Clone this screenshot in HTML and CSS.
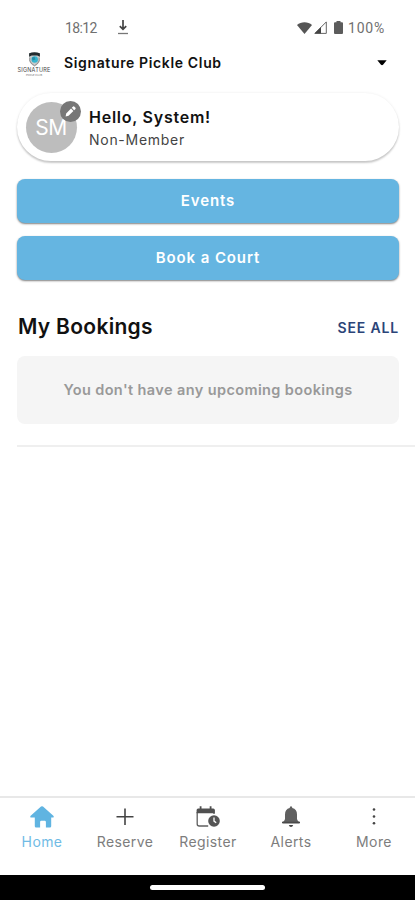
FILE: index.html
```html
<!DOCTYPE html>
<html lang="en">
<head>
<meta charset="utf-8">
<meta name="viewport" content="width=device-width, initial-scale=1">
<title>Signature Pickle Club</title>
<link rel="stylesheet" href="styles.css">
</head>
<body>
<div class="app">
  <div class="status">
    <span class="time">18:12</span>
    <svg class="download" width="12" height="15" viewBox="0 0 12 15"><path d="M6 0v9M2.800 6.200 6 9.400l3.200-3.200" fill="none" stroke="#444" stroke-width="1.700"/><path d="M1 13.500h10" stroke="#777" stroke-width="1.300"/></svg>
    <div class="status-right">
      <svg width="15" height="12" viewBox="0 0 15 12"><path d="M0 3C4-.8 11-.8 15 3L7.500 12z" fill="#555"/></svg>
      <svg width="13" height="13" viewBox="0 0 13 13"><path d="M.9 12.400 12.300.9v11.500z" fill="none" stroke="#666" stroke-width="1"/><path d="M.5 12.500 7 6v6.500z" fill="#444"/></svg>
      <svg class="battery" width="9" height="13" viewBox="0 0 9 13"><path d="M2.500 0h4v1.300H8q1 0 1 1V12q0 1-1 1H1q-1 0-1-1V2.300q0-1 1-1h1.500z" fill="#5c5c5c"/></svg>
      <span class="percent">100%</span>
    </div>
  </div>
  <header class="club">
    <div class="logo">
      <svg width="13" height="15" viewBox="0 0 14 16"><path d="M1.200 1.500Q7-.8 12.800 1.500V9Q12 13 7 15.500 2 13 1.200 9z" fill="#c9cccd"/><path d="M1.200 1.300Q7-.8 12.800 1.300V5L10 3.700H4L1.200 5z" fill="#222b2e"/><path d="M2 6v3.500Q3 12.500 7 14.700q4-2.200 5-5.200V6" fill="none" stroke="#777" stroke-width=".8"/><circle cx="7.200" cy="8" r="3.500" fill="#35b5cf"/><path d="m4 6 3-1 1 3-3 1z" fill="#258ba5"/></svg>
      <span class="logo-name">SIGNATURE</span>
      <span class="logo-sub">PICKLE CLUB</span>
    </div>
    <span class="club-name">Signature Pickle Club</span>
    <svg class="caret" width="10" height="6" viewBox="0 0 10 6"><path d="M.3.3h9.400L6 4.800Q5 5.700 4 4.800z" fill="#000"/></svg>
  </header>
  <main>
    <section class="profile">
      <div class="avatar">SM
        <span class="edit"><svg width="13" height="13" viewBox="0 0 12 12"><path d="M1.500 10.500 2 7.800 6.500 3.300l2.200 2.200-4.500 4.500zM7.200 2.600l1.200-1.200q.5-.4 1 0l1.200 1.200q.4.500 0 1L9.400 4.800z" fill="#fff"/></svg></span>
      </div>
      <div class="who"><span class="hello">Hello, System!</span><span class="member">Non-Member</span></div>
    </section>
    <button class="action">Events</button>
    <button class="action">Book a Court</button>
    <div class="section-head"><h1>My Bookings</h1><a class="see-all">SEE ALL</a></div>
    <div class="empty"><span>You don't have any upcoming bookings</span></div>
    <div class="divider"></div>
  </main>
  <nav>
    <a class="tab active"><svg width="24" height="22" viewBox="0 0 24 22"><path d="M11 .6q1-.8 2 0l10.600 9.300q.7 1.600-.6 1.600h-1.800v8.700q0 1.300-1.300 1.300h-4v-5.600q0-1.200-1.200-1.200h-3.400q-1.200 0-1.200 1.200v5.600h-4q-1.300 0-1.300-1.300v-8.700H1q-1.300 0-.6-1.600z" fill="#60b4e1"/></svg><span>Home</span></a>
    <a class="tab"><svg width="24" height="22" viewBox="0 0 24 22"><path d="M12 2.500v16.500M3.500 10.800h17" stroke="#444" stroke-width="1.600"/></svg><span>Reserve</span></a>
    <a class="tab"><svg width="24" height="22" viewBox="0 0 24 22"><path d="M1.200 6v12q0 2 2 2h9M18 4v4" fill="none" stroke="#606060" stroke-width="1.300"/><path d="M.6 7.300V4q0-1.500 1.500-1.500h15.200q1.500 0 1.500 1.500v3.300z" fill="#505050"/><path d="M4.600.3v4M14.600.3v4" stroke="#505050" stroke-width="1.800"/><circle cx="18" cy="15" r="6.600" fill="#fff"/><circle cx="18" cy="15" r="5.800" fill="#555"/><path d="M18 11.500v3.600l2.200 1.600" fill="none" stroke="#fff" stroke-width="1.300"/></svg><span>Register</span></a>
    <a class="tab"><svg width="20" height="22" viewBox="0 0 20 22"><path d="M10 .3q1.300 0 1.300 1.800Q16 3.300 16 8.500v4.500q0 1.500 2.500 3.400v1H1.500v-1Q4 14.500 4 13V8.500Q4 3.300 8.700 2.100 8.700.3 10 .3z" fill="#606060"/><path d="M1 16.400h18" stroke="#4a4a4a" stroke-width="1.400"/><path d="M7.800 19h4.400Q11.600 21 10 21t-2.200-2z" fill="#444"/></svg><span>Alerts</span></a>
    <a class="tab"><svg width="24" height="22" viewBox="0 0 24 22"><g fill="#444"><circle cx="12" cy="3.500" r="1.300"/><circle cx="12" cy="10.500" r="1.300"/><circle cx="12" cy="17.300" r="1.300"/></g></svg><span>More</span></a>
  </nav>
  <div class="system"><div class="pill"></div></div>
</div>
</body>
</html>
```
FILE: styles.css
```css
* { box-sizing: border-box; }
body { margin: 0; background: #fff; font-family: Inter, "Liberation Sans", sans-serif; color: #111; }
svg { display: block; flex: none; overflow: visible; }
span, h1, a { white-space: nowrap; }
.app { width: 415px; height: 900px; display: flex; flex-direction: column; overflow: hidden; }
.status { height: 45px; padding: 10px 29px 0 65px; display: flex; align-items: center; font-family: Roboto, sans-serif; color: #707070; }
.time { width: 32px; font-size: 14px; letter-spacing: -.6px; }
.download { margin-left: 20px; }
.status-right { margin-left: auto; display: flex; align-items: center; gap: 2px; }
.battery { margin: 0 3px 0 5px; }
.percent { width: 38px; font-size: 14px; letter-spacing: .8px; }
.club { height: 36px; padding: 0 28px 0 17px; display: flex; align-items: center; }
.logo { width: 34px; height: 28px; margin-right: 13px; padding-top: 3px; display: flex; flex-direction: column; align-items: center; }
.logo-name { font-size: 5.5px; line-height: 7px; letter-spacing: .2px; color: #444; }
.logo-sub { font-size: 2.5px; line-height: 3px; color: #666; }
.club-name { margin-top: -2px; font-size: 14px; font-weight: 600; letter-spacing: .64px; }
.caret { margin-left: auto; }
main { flex: 1; padding: 12px 16px 0 17px; }
.profile { height: 68px; border-radius: 34px; padding-left: 9px; display: flex; align-items: center; box-shadow: 0 2px 2px rgba(0,0,0,.2), 0 0 3px rgba(0,0,0,.08); }
.avatar { position: relative; width: 51px; height: 51px; border-radius: 50%; background: #bdbdbd; color: #fff; font-size: 21px; letter-spacing: -.4px; padding-right: 1px; display: flex; align-items: center; justify-content: center; }
.edit { position: absolute; top: -1px; right: -4px; width: 21px; height: 21px; border-radius: 50%; background: #777; display: flex; align-items: center; justify-content: center; }
.who { margin: 2px 0 0 12px; display: flex; flex-direction: column; }
.hello { font-size: 16px; line-height: 23px; font-weight: 600; letter-spacing: .75px; }
.member { font-size: 14px; line-height: 22px; letter-spacing: .72px; color: #444; }
.action { display: flex; align-items: center; justify-content: center; width: 100%; height: 44px; margin: 18px 0 0; padding: 0 0 2px; border: 0; border-radius: 8px; background: #65b5e1; color: #fff; font: 600 15px Inter, sans-serif; letter-spacing: .9px; box-shadow: 0 1px 2px rgba(0,0,0,.5); }
.action + .action { margin-top: 13px; }
.section-head { height: 30px; margin-top: 31px; padding: 0 0 0 1px; display: flex; align-items: center; justify-content: space-between; }
h1 { margin: 0; font-size: 21px; font-weight: 600; letter-spacing: .3px; }
.see-all { padding-top: 3px; font-size: 14px; font-weight: 600; letter-spacing: .85px; color: #2b4478; }
.empty { height: 68px; margin-top: 15px; padding-bottom: 2px; border-radius: 8px; background: #f5f5f5; display: flex; align-items: center; justify-content: center; color: #999; font-size: 14.5px; font-weight: 600; letter-spacing: .39px; }
.divider { height: 2px; margin: 21px -16px 0 0; background: #efefef; }
nav { height: 79px; border-top: 2px solid #e8e8e8; display: grid; grid-template-columns: repeat(5, 1fr); padding-top: 8px; }
.tab { display: flex; flex-direction: column; align-items: center; font-size: 14px; line-height: 20px; color: #7d7d7d; letter-spacing: .4px; gap: 4px; }
.tab span { padding-left: 1px; }
.active { color: #70bbe5; }
.system { height: 25px; background: #000; display: flex; align-items: center; justify-content: center; }
.pill { width: 115px; height: 5px; border-radius: 3px; background: #fff; }
```
